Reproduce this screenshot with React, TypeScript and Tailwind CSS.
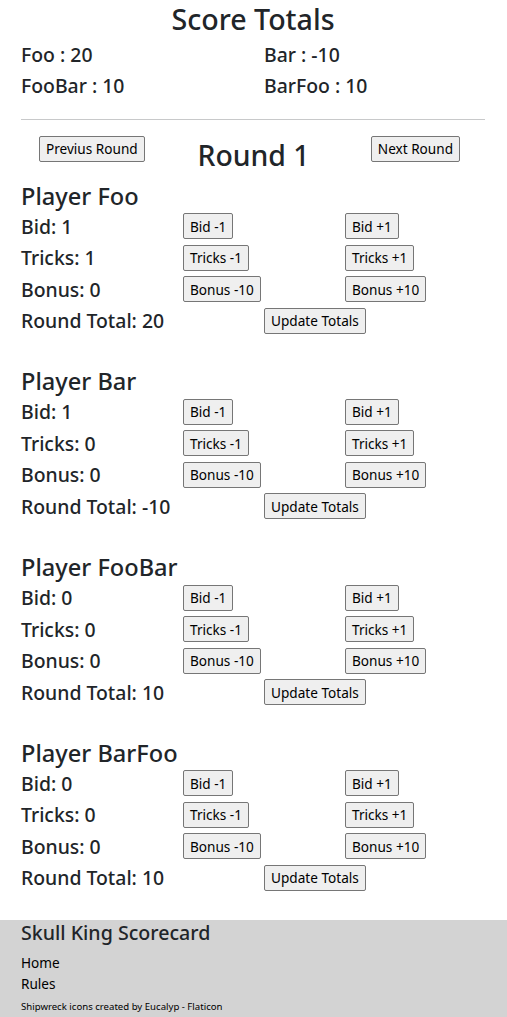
import React from 'react';

type Player = { name: string; bid: number; tricks: number; bonus: number; total: number };

const players: Player[] = [
  { name: 'Foo', bid: 1, tricks: 1, bonus: 0, total: 20 },
  { name: 'Bar', bid: 1, tricks: 0, bonus: 0, total: -10 },
  { name: 'FooBar', bid: 0, tricks: 0, bonus: 0, total: 10 },
  { name: 'BarFoo', bid: 0, tricks: 0, bonus: 0, total: 10 },
];

const totals = [
  { name: 'Foo', score: 20 },
  { name: 'Bar', score: -10 },
  { name: 'FooBar', score: 10 },
  { name: 'BarFoo', score: 10 },
];

function Btn({ children }: { children: React.ReactNode }) {
  return (
    <button className="h-[26px] px-[6px] text-[13.6px] leading-[21px] text-black bg-[#efefef] border border-[#767676] rounded-[2px] whitespace-nowrap">
      {children}
    </button>
  );
}

function PlayerCard({ player }: { player: Player }) {
  const rows = [
    { label: `Bid: ${player.bid}`, minus: 'Bid -1', plus: 'Bid +1' },
    { label: `Tricks: ${player.tricks}`, minus: 'Tricks -1', plus: 'Tricks +1' },
    { label: `Bonus: ${player.bonus}`, minus: 'Bonus -10', plus: 'Bonus +10' },
  ];
  return (
    <div>
      <h3 className="text-[23.6px] leading-[29px] font-medium">Player {player.name}</h3>
      {rows.map((row) => (
        <div key={row.label} className="grid grid-cols-[162px_162px_162px] h-[31.5px] items-center">
          <span className="text-[19.4px] font-medium">{row.label}</span>
          <div>
            <Btn>{row.minus}</Btn>
          </div>
          <div>
            <Btn>{row.plus}</Btn>
          </div>
        </div>
      ))}
      <div className="grid grid-cols-[243px_243px] h-[31.5px] items-center">
        <span className="text-[19.4px] font-medium">Round Total: {player.total}</span>
        <div>
          <Btn>Update Totals</Btn>
        </div>
      </div>
    </div>
  );
}

export default function App() {
  return (
    <div className="w-[507px] min-h-[1017px] flex flex-col bg-white text-[#212529] font-['Noto_Sans','Liberation_Sans',sans-serif]">
      <div className="pl-[21px]">
        <h1 className="mt-[1px] h-[36px] text-center text-[28.6px] leading-[36px] font-medium pr-[22px]">Score Totals</h1>
        <div className="grid grid-cols-[243px_243px] mt-[2.5px]">
          {totals.map((t) => (
            <div key={t.name} className="h-[31px] flex items-center text-[19.4px] font-medium">
              {t.name} : {t.score}
            </div>
          ))}
        </div>
        <hr className="mt-[17px] w-[464px] border-0 border-t border-[#c8c9ca]" />
        <div className="grid grid-cols-3 w-[465px] mt-[16px] items-start">
          <div className="pl-[18px]">
            <Btn>Previus Round</Btn>
          </div>
          <h1 className="text-center text-[28.4px] leading-[36px] font-medium mt-[1px]">Round 1</h1>
          <div className="flex justify-end pr-[26px]">
            <Btn>Next Round</Btn>
          </div>
        </div>
        <div className="mt-[9px] flex flex-col gap-[30.7px]">
          {players.map((p) => (
            <PlayerCard key={p.name} player={p} />
          ))}
        </div>
      </div>
      <footer className="mt-[26px] flex-1 bg-[#d3d3d3] pl-[21px] pt-[1px] pb-[3px]">
        <h4 className="text-[19.6px] leading-[24px] font-medium">Skull King Scorecard</h4>
        <div className="mt-[7.5px] text-[13.6px] leading-[21px] text-black">
          <div>Home</div>
          <div>Rules</div>
        </div>
        <p className="mt-[5px] text-[9.6px] leading-[15px] text-black">Shipwreck icons created by Eucalyp - Flaticon</p>
      </footer>
    </div>
  );
}
